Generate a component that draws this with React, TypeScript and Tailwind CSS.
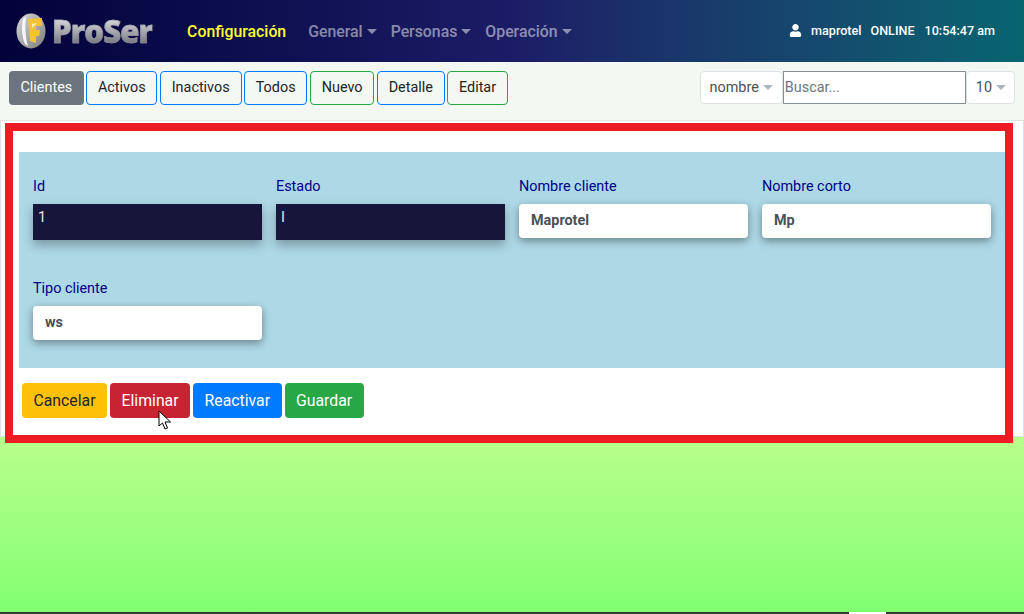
import { FaUser } from "react-icons/fa";

function Caret({ className = "" }: { className?: string }) {
  return (
    <span
      className={`ml-[4px] inline-block h-0 w-0 border-x-[5px] border-t-[5px] border-x-transparent border-t-current ${className}`}
    />
  );
}

function Logo() {
  return (
    <div className="flex items-center">
      <svg width="30" height="36" viewBox="0 0 30 36" className="mr-[6px]">
        <defs>
          <linearGradient id="disc" x1="0" y1="0" x2="1" y2="1">
            <stop offset="0" stopColor="#d8d8d8" />
            <stop offset="1" stopColor="#7d7d7d" />
          </linearGradient>
        </defs>
        <ellipse cx="15" cy="18" rx="14.5" ry="17.5" fill="url(#disc)" />
        <path d="M7 6 C5 14 6 24 9 31 L12 33 C9 24 9 12 10 3 Z" fill="#f7f7f7" />
        <path d="M12 6 L26 5 L26 13 L20 13 L20 17 L24 17 L23 23 L20 23 L20 30 L14 28 Z" fill="#f2c530" />
        <path d="M16 11 L21 10 L16 15 Z" fill="#fff3b0" />
      </svg>
      <span className="bg-gradient-to-b from-[#e2e2e8] via-[#a8a8b0] to-[#6a6a72] bg-clip-text font-['Open_Sans',sans-serif] text-[31px] leading-none font-extrabold tracking-[-0.9px] text-transparent [-webkit-text-stroke:0.5px_#9a9aa2]">
        ProSer
      </span>
    </div>
  );
}

function NavMenu({ label }: { label: string }) {
  return (
    <span className="flex items-center text-[rgba(255,255,255,0.5)]">
      {label}
      <Caret />
    </span>
  );
}

function ToolButton({ label, tone }: { label: string; tone: "blue" | "green" }) {
  return (
    <button
      type="button"
      className={`h-[34px] rounded-[4px] border px-[10.9px] text-[14.4px] text-[#212529] ${
        tone === "blue" ? "border-[#007bff]" : "border-[#28a745]"
      }`}
    >
      {label}
    </button>
  );
}

function Field({ label, value, dark }: { label: string; value: string; dark?: boolean }) {
  return (
    <div className="w-[229px]">
      <div className="mb-[7px] h-[21px] text-[14.4px] leading-[21px] text-[#00008b]">{label}</div>
      {dark ? (
        <div className="h-[36px] bg-[#16163a] pl-[5px] text-[14.4px] leading-[27px] text-[#e8e8e8] shadow-[0_5px_10px_rgba(0,0,0,0.3)]">
          {value}
        </div>
      ) : (
        <div className="h-[34px] rounded-[4px] bg-white pl-[12px] text-[14.4px] leading-[33px] font-bold text-[#495057] shadow-[0_3px_8px_rgba(0,0,0,0.4)]">
          {value}
        </div>
      )}
    </div>
  );
}

function ActionButton({ label, className }: { label: string; className: string }) {
  return (
    <button type="button" className={`h-[35px] rounded-[4px] px-[11.5px] text-[15.8px] ${className}`}>
      {label}
    </button>
  );
}

export default function App() {
  return (
    <div className="flex h-[614px] w-[1024px] flex-col overflow-hidden font-['Roboto',sans-serif]">
      <header className="flex h-[62px] shrink-0 items-center bg-gradient-to-r from-[#03033a] via-[#1c1c66] via-50% to-[#066570] pr-[29px] pl-[16px]">
        <Logo />
        <span className="mt-[1px] ml-[35px] text-[15.84px] font-medium text-[#ffff33]">Configuración</span>
        <nav className="mt-[1px] ml-[22px] flex gap-[14px] text-[15.84px] font-medium">
          <NavMenu label="General" />
          <NavMenu label="Personas" />
          <NavMenu label="Operación" />
        </nav>
        <div className="ml-auto flex items-center text-[12.6px] font-medium text-white">
          <FaUser size={13} className="mr-[9px] mb-[1px]" />
          <span>maprotel</span>
          <span className="ml-[9px]">ONLINE</span>
          <span className="ml-[10px]">10:54:47 am</span>
        </div>
      </header>

      <div className="flex h-[58px] shrink-0 items-start bg-[#f3f8f3] pt-[9px] pr-[9px] pl-[9px]">
        <div className="flex gap-[2.33px]">
          <button
            type="button"
            className="h-[34px] rounded-[4px] bg-[#6c757d] px-[11.5px] text-[14.4px] text-white"
          >
            Clientes
          </button>
          <ToolButton label="Activos" tone="blue" />
          <ToolButton label="Inactivos" tone="blue" />
          <ToolButton label="Todos" tone="blue" />
          <ToolButton label="Nuevo" tone="green" />
          <ToolButton label="Detalle" tone="blue" />
          <ToolButton label="Editar" tone="green" />
        </div>
        <div className="ml-auto flex h-[33px] text-[14.4px] text-[#495057]">
          <span className="flex items-center rounded-[4px] border border-[#dee2e6] bg-white px-[9px]">
            nombre
            <Caret className="text-[#adb5bd]" />
          </span>
          <input
            placeholder="Buscar..."
            className="w-[183px] border border-[#868e96] bg-white px-[1px] text-[14.4px] placeholder:text-[#6c757d]"
          />
          <span className="flex items-center rounded-[4px] border border-[#dee2e6] bg-white pr-[8px] pl-[9px]">
            10
            <Caret className="text-[#adb5bd]" />
          </span>
        </div>
      </div>

      <main className="relative h-[317px] shrink-0 border border-[#dfe3df] bg-white pt-[2px] pl-[4px]">
        <div className="h-[320px] w-[1008px] border-[8px] border-[#ed1c24] pt-[21px]">
          <section className="ml-[6px] h-[216px] w-[986px] bg-[#add8e6] pt-[24px] pl-[14px]">
            <div className="flex flex-wrap gap-x-[14px] gap-y-[38px]">
              <Field label="Id" value="1" dark />
              <Field label="Estado" value="I" dark />
              <Field label="Nombre cliente" value="Maprotel" />
              <Field label="Nombre corto" value="Mp" />
              <Field label="Tipo cliente" value="ws" />
            </div>
          </section>
          <div className="relative mt-[15px] ml-[9px] flex gap-[3px]">
            <ActionButton label="Cancelar" className="bg-[#ffc107] text-[#212529]" />
            <ActionButton label="Eliminar" className="bg-[#c82333] text-white" />
            <ActionButton label="Reactivar" className="bg-[#007bff] text-white" />
            <ActionButton label="Guardar" className="bg-[#28a745] text-white" />
            <svg width="14" height="21" viewBox="0 0 14 21" className="absolute top-[27px] left-[136px]">
              <path d="M1 1 L1 16 L4.5 13 L7 19 L9.5 18 L7 12 L12.5 12 Z" fill="#fff" stroke="#000" strokeWidth="1" />
            </svg>
          </div>
        </div>
      </main>

      <div className="flex flex-1 flex-col justify-end bg-gradient-to-b from-[#b8ff8c] to-[#80ff70]">
        <div className="flex h-[2px] bg-[#2f3b2f]">
          <span className="ml-[849px] w-[37px] bg-white" />
        </div>
      </div>
    </div>
  );
}
